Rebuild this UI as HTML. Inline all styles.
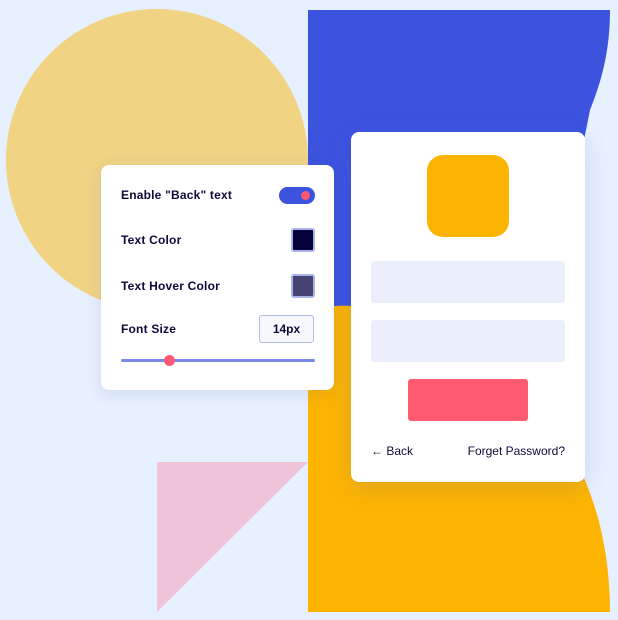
<!DOCTYPE html>
<html><head><style>
body{margin:0;width:618px;height:620px;background:#e7f0fe;position:relative;overflow:hidden;font-family:"Liberation Sans",sans-serif;color:#0d0a3a}
.abs{position:absolute}
.panel{left:101px;top:165px;width:233px;height:225px;background:#fff;border-radius:8px;box-shadow:0 4px 16px rgba(80,100,180,.15)}
.lbl{position:absolute;left:20px;font-size:12px;font-weight:bold;letter-spacing:.2px}
.card{left:351px;top:132px;width:234px;height:350px;background:#fff;border-radius:8px;box-shadow:0 6px 24px rgba(80,100,200,.18)}
</style></head><body>
<svg class="abs" style="left:0;top:0" width="618" height="620">
<circle cx="157" cy="160" r="151" fill="#f0d484"/>
<polygon points="157,462 308,462 157,612" fill="#efc4d8"/>
<path d="M308 10 H610 C610 50 602 80 590 110 L584 140 L584 312 L308 312 Z" fill="#3c53de"/>
<path d="M308 312 Q330 304 352 306 L584 306 L584 478 C600 515 610 560 610 612 H308 Z" fill="#fdb400"/>
</svg>
<div class="abs panel">
<div class="lbl" style="top:23px">Enable "Back" text</div>
<div class="abs" style="left:178px;top:22px;width:36px;height:17px;border-radius:9px;background:#3c53de"></div>
<div class="abs" style="left:200px;top:26px;width:9px;height:9px;border-radius:50%;background:#ff5a72"></div>
<div class="lbl" style="top:68px">Text Color</div>
<div class="abs" style="left:190px;top:63px;width:20px;height:20px;border:2px solid #a8b4e8;border-radius:3px;background:#06033a"></div>
<div class="lbl" style="top:114px">Text Hover Color</div>
<div class="abs" style="left:190px;top:109px;width:20px;height:20px;border:2px solid #a8b4e8;border-radius:3px;background:#464272"></div>
<div class="lbl" style="top:157px">Font Size</div>
<div class="abs" style="left:158px;top:150px;width:53px;height:26px;border:1.5px solid #b0bbee;border-radius:3px;background:#f7f9ff;font-size:12px;font-weight:bold;text-align:center;line-height:26px">14px</div>
<div class="abs" style="left:20px;top:194px;width:194px;height:3px;border-radius:2px;background:#7a88ea"></div>
<div class="abs" style="left:63px;top:190px;width:11px;height:11px;border-radius:50%;background:#ff5a72"></div>
</div>
<div class="abs card">
<div class="abs" style="left:76px;top:23px;width:82px;height:82px;border-radius:16px;background:#fdb400"></div>
<div class="abs" style="left:20px;top:129px;width:194px;height:42px;border-radius:3px;background:#eaedfa"></div>
<div class="abs" style="left:20px;top:188px;width:194px;height:42px;border-radius:3px;background:#eaedfa"></div>
<div class="abs" style="left:57px;top:247px;width:120px;height:42px;border-radius:3px;background:#ff5a72"></div>
<div class="abs" style="left:20px;top:312px;font-size:12px">&#8592; Back</div>
<div class="abs" style="right:20px;top:312px;font-size:12px">Forget Password?</div>
</div>
</body></html>
